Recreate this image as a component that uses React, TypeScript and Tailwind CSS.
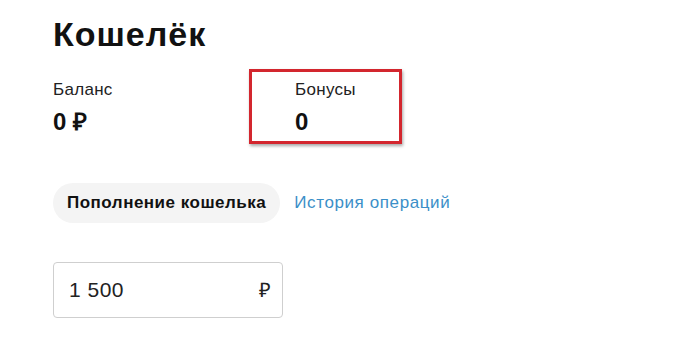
const font = { fontFamily: '"Liberation Sans", Arial, sans-serif' };

function Stat({ label, value }: { label: string; value: string }) {
  return (
    <div className="flex flex-col">
      <span className="text-[17px] leading-[20px] tracking-[0.3px] text-[#222]">{label}</span>
      <span className="mt-[8px] text-[24px] leading-[28px] font-bold text-[#111]">{value}</span>
    </div>
  );
}

export default function App() {
  return (
    <div className="w-[700px] h-[337px] bg-white pl-[53px] pt-[14px] overflow-hidden" style={font}>
      <h1 className="text-[34px] leading-[40px] font-bold text-[#111] tracking-[1px]">Кошелёк</h1>

      <div className="mt-[26px] flex">
        <div className="w-[242px]">
          <Stat label="Баланс" value="0 ₽" />
        </div>
        <div className="relative">
          <Stat label="Бонусы" value="0" />
          <div className="absolute left-[-46px] top-[-11px] w-[153px] h-[75px] border-[3px] border-[#d3262e] shadow-[1px_2px_3px_rgba(0,0,0,0.35)]" />
        </div>
      </div>

      <div className="mt-[47px] flex items-center gap-[14px]">
        <button className="h-[40px] px-[14px] rounded-full bg-[#f4f4f4] text-[17px] tracking-[0.5px] font-bold text-[#111]">
          Пополнение кошелька
        </button>
        <a className="text-[17px] tracking-[0.6px] text-[#3b8fc8]">История операций</a>
      </div>

      <div className="mt-[39px] w-[230px] h-[56px] rounded-[4px] border border-[#cfcfcf] flex items-center justify-between pl-[15px] pr-[11px]">
        <span className="text-[21px] tracking-[0.5px] text-[#222]">1 500</span>
        <span className="text-[20px] text-[#222]">₽</span>
      </div>
    </div>
  );
}
